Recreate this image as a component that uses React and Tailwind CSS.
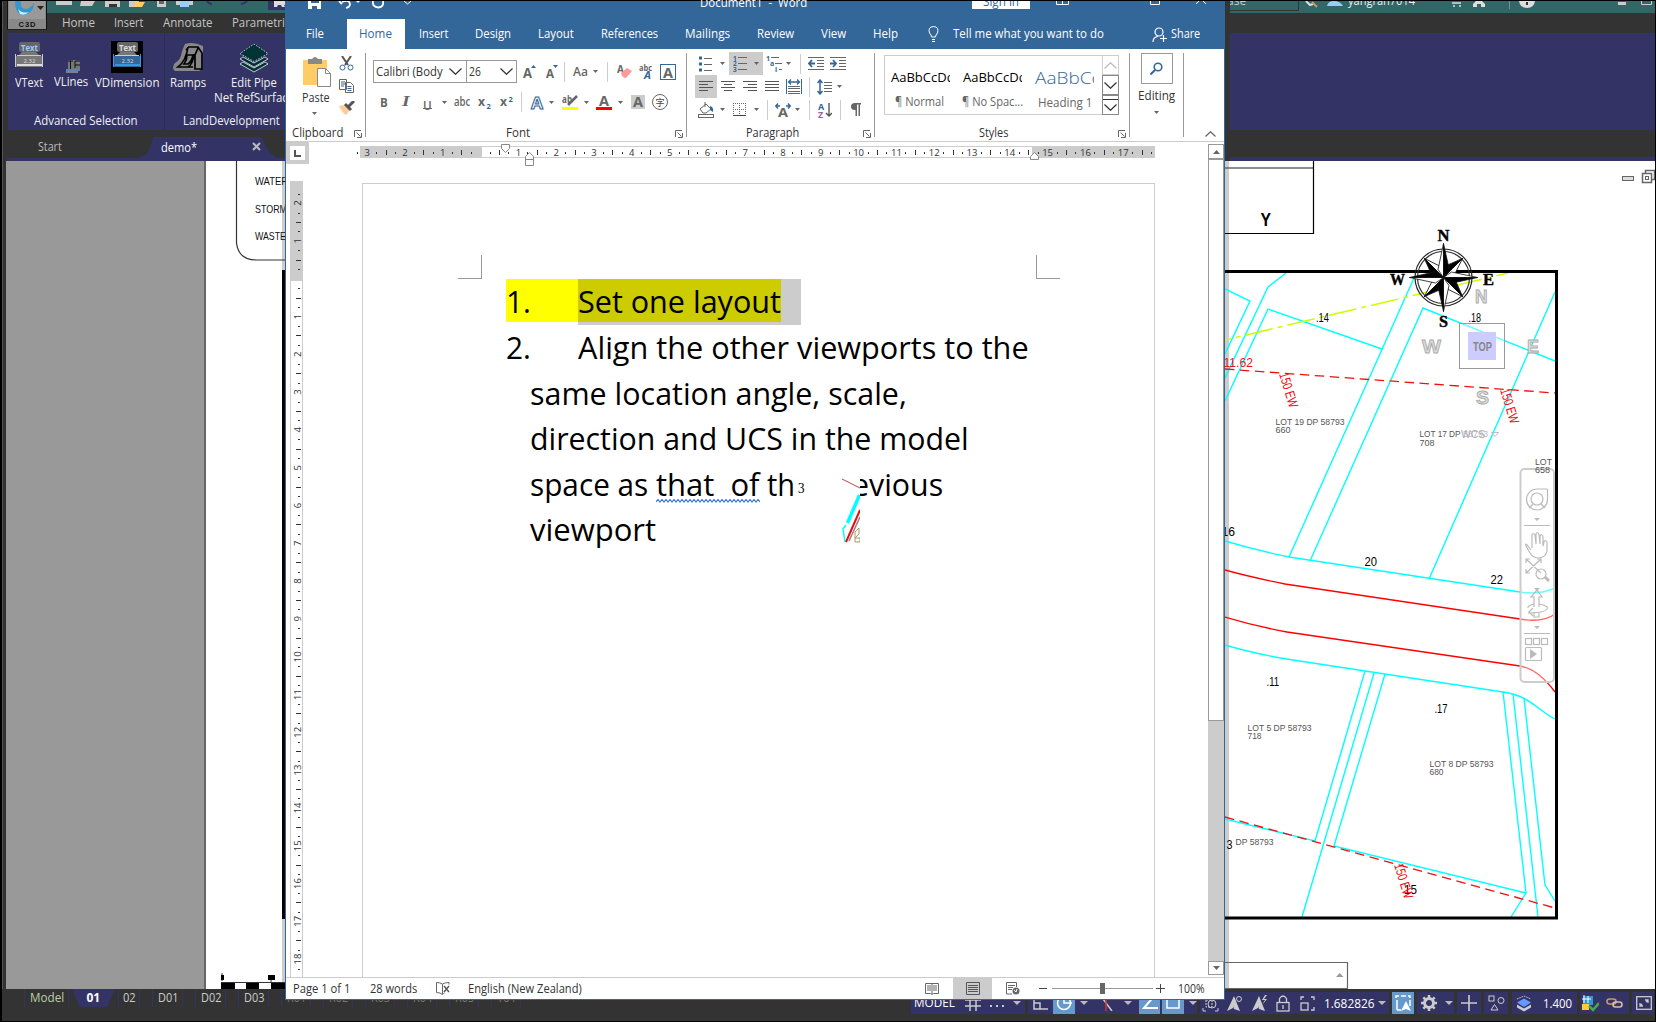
import React, { useLayoutEffect, useRef, useState } from "react";

/* Text squeezed or stretched horizontally to the width of its box. */
function Fit({ className = "", children }) {
  const box = useRef(null);
  const text = useRef(null);
  const [scale, setScale] = useState(1);
  useLayoutEffect(() => {
    const w = text.current.offsetWidth;
    if (w) setScale(box.current.clientWidth / w);
  }, [children]);
  return (
    <span ref={box} className={"inline-block shrink-0 text-left " + className}>
      <span ref={text} className="inline-block origin-left whitespace-pre" style={{ transform: `scaleX(${scale})` }}>
        {children}
      </span>
    </span>
  );
}

const Svg = ({ w, h, className = "", children, ...rest }) => (
  <svg width={w} height={h} viewBox={`0 0 ${w} ${h}`} className={"block shrink-0 " + className} fill="none" {...rest}>
    {children}
  </svg>
);

const Caret = ({ className = "", fill = "#666" }) => (
  <Svg w={5} h={3} className={className}><path d="M0 0h5L2.5 3z" fill={fill} /></Svg>
);
const Sep = ({ className = "" }) => <div className={"h-5 w-px shrink-0 bg-[#ccc] " + className} />;
const Launcher = ({ className = "" }) => (
  <Svg w={8} h={8} className={className}>
    <path d="M.5 7V.5H7M2.5 2.5l4 4M7.5 3v4.5H3" stroke="#666" />
  </Svg>
);
const Chevron = ({ w = 13, h = 7, stroke = "#333", up, className = "" }) => (
  <Svg w={w} h={h} className={className}>
    <path d={up ? `M.5 ${h - 0.5}L${w / 2} .7L${w - 0.5} ${h - 0.5}` : `M.5 .5L${w / 2} ${h - 0.7}L${w - 0.5} .5`} stroke={stroke} strokeWidth="1.2" />
  </Svg>
);

/* ---------- CAD application, behind ---------- */

const CadTitleLeft = () => (
  <Svg w={239} h={12}>
    <rect width="239" height="12" fill="#366" />
    <rect x="9" y="0" width="16" height="4" fill="#ccc" />
    <path d="M34 0h14l-3 5H33z" fill="#ccc" />
    <rect x="58" y="0" width="15" height="6" fill="#ccc" /><rect x="62" y="3" width="8" height="3" fill="#333" />
    <rect x="82" y="0" width="10" height="6" fill="#ccc" /><path d="M88 1h10l-3 5h-8z" fill="#fc6" />
    <rect x="110" y="0" width="9" height="6" fill="#ccc" /><rect x="112" y="0" width="5" height="3" fill="#666" />
    <rect x="129" y="0" width="17" height="4" fill="#ccc" /><rect x="133" y="0" width="9" height="6" fill="#9cf" />
    <path d="M160 0q2 3 5 3M200 0q-3 3-6 3" stroke="#336" strokeWidth="2" />
    <rect x="221" y="0" width="18" height="9" fill="#333366" />
    <path d="M227 0h12v4h-2l1 2h-3l-1-2h-3l-1 2h-3z" fill="#ddd" />
  </Svg>
);

const AppButton = () => (
  <Svg w={40} h={29}>
    <rect x=".5" y="-4" width="39" height="32" fill="#888" stroke="#111" />
    <rect x="2" y="-4" width="36" height="23" fill="#999" />
    <path d="M8 0h6q-1 7 4 8 5 0 9-6 0 10-10 12-9 0-9-14z" fill="#39c" />
    <path d="M11 8q4 5 11 3-4 4-9 2z" fill="#cef" />
    <path d="M30 5h7l-3.500 4z" fill="#222" />
    <rect x="1" y="18" width="38" height="10" fill="#888" />
    <text x="20" y="25.500" textAnchor="middle" fontSize="7.500" fontWeight="bold" textLength="17" fontFamily="Liberation Sans, sans-serif" fill="#111">C3D</text>
  </Svg>
);

const Dimension = ({ dark }) => (
  <Svg w={32} h={32}>
    {dark && <rect width="32" height="32" fill="#000" />}
    <rect x="6" y="1" width="21" height="10" rx="2" fill="#666" />
    <text x="16.500" y="9.500" textAnchor="middle" fontSize="9" fontWeight="bold" textLength="17" lengthAdjust="spacingAndGlyphs" fontFamily="Open Sans, sans-serif" fill={dark ? "#ddd" : "#9cf"}>Text</text>
    <path d="M9 11h14l3 3H6z" fill="#777" />
    <rect x="2" y="15" width="28" height="11" rx="1" fill={dark ? "#369" : "#777"} />
    <text x="16.500" y="21.500" textAnchor="middle" fontSize="6" fontFamily="Open Sans, sans-serif" fill="#ddd">2.32</text>
    <path d="M2.500 13v13M29.500 13v13" stroke={dark ? "#39f" : "#ccc"} /><path d="M4 14.500h24" stroke="#ccc" /><path d="M4 24h25" stroke={dark ? "#3af" : "#fff"} strokeWidth="1.500" />
  </Svg>
);

const CadTool = ({ className, icon, label, second }) => (
  <div className={"flex shrink-0 flex-col items-center " + className}>
    <div className="flex h-[33px] items-end">{icon}</div>
    {label}
    {second}
  </div>
);

function CadLeft() {
  return (
    <div className="flex h-[161px] w-[285px] flex-col overflow-hidden pl-px text-[12px] text-[#f0f0f0]">
      <div className="flex h-8 items-start">
        <div className="w-[40px]"><AppButton /></div>
        <div className="flex flex-col">
          <CadTitleLeft />
          <div className="flex h-[20px] items-center pl-[15px] leading-[20px] text-[#c4c4c4]">
            <Fit className="w-[33px]">Home</Fit>
            <Fit className="ml-[19px] w-[29px]">Insert</Fit>
            <Fit className="ml-[20px] w-[50px]">Annotate</Fit>
            <Fit className="ml-[19px] w-[58px]">Parametric</Fit>
          </div>
        </div>
      </div>
      <div className="ml-px flex h-[97px] gap-px overflow-hidden bg-[#2b2b55]">
        <div className="flex w-[156px] shrink-0 flex-col bg-[#333366]">
          <div className="flex h-[76px] pt-[7px] leading-[15px]">
            <CadTool className="ml-[6px] w-[30px]" icon={<Dimension />} label={<Fit className="mt-[2px] w-[28px]">VText</Fit>} />
            <CadTool
              className="ml-[10px] w-[34px]"
              icon={<Svg w={14} h={13} className="ml-[4px]"><rect x="2" y="0" width="12" height="9" fill="#777" /><path d="M2 1h5M4.500 1v8M9 1h5M9 5h5M9 1v7" stroke="#111" /><path d="M0 10h14" stroke="#9cf" /><path d="M0 12h12" stroke="#ccb" /></Svg>}
              label={<Fit className="mt-px w-[34px]">VLines</Fit>}
            />
            <CadTool className="ml-[6px] w-[65px]" icon={<Dimension dark />} label={<Fit className="mt-[2px] w-[64px]">VDimension</Fit>} />
          </div>
          <Fit className="ml-[26px] mt-[4px] w-[104px] leading-4">Advanced Selection</Fit>
        </div>
        <div className="flex w-[130px] shrink-0 flex-col bg-[#333366]">
          <div className="flex h-[76px] pt-[7px] leading-[15px]">
            <CadTool
              className="ml-[5px] w-[36px]"
              icon={<Svg w={32} h={32}><path d="M13 3q8-3 18 2v22l-4 3H3q-4-3 0-8q6-3 7-12z" fill="#888" /><path d="M16 6l10 0 4 6v16h-7V14l3-7M16 6q-2 14-10 20h15M22 13q-1 10-6 13M16 7l-2 2M15 14h6q-1 6-5 9h-4q3-4 3-9" stroke="#000" strokeWidth="1.700" /></Svg>}
              label={<Fit className="mt-[2px] w-[36px]">Ramps</Fit>}
            />
            <CadTool
              className="ml-[8px] w-[80px]"
              icon={<Svg w={30} h={30}><g fill="#033" stroke="#eee" strokeWidth=".8"><path d="M1 21l14 8 14-8-3-2-11 6-11-6z" /><path d="M1 16l14 8 14-8-3-2-11 6-11-6z" /><path d="M1 10.500l14 8 14-8L15 1z" strokeDasharray="1.500 1.500" /></g></Svg>}
              label={<Fit className="mt-[2px] w-[46px]">Edit Pipe</Fit>}
              second={<Fit className="w-[80px]">Net RefSurface</Fit>}
            />
          </div>
          <Fit className="ml-[18px] mt-[4px] w-[97px] leading-4">LandDevelopment</Fit>
        </div>
      </div>
      <div className="flex h-[28px] items-center pl-[31px] leading-5 text-[#ddd]">
        <Fit className="mt-[6px] w-[24px] text-[#bbb]">Start</Fit>
        <div className="ml-[76px] mt-[7px] flex h-[21px] w-[140px] items-center rounded-t-[9px] bg-[#333366] pl-[23px] [clip-path:polygon(0_100%,7%_75%,11%_0,88%_0,94%_75%,100%_100%)]">
          <Fit className="w-[36px] text-white">demo*</Fit>
          <Svg w={9} h={9} className="-mt-[2px] ml-[55px]"><path d="M1 1l7 7M8 1l-7 7" stroke="#bbb" strokeWidth="2" /></Svg>
        </div>
      </div>
      <div className="h-[4px] shrink-0 bg-[#333366]" />
    </div>
  );
}

function CadTopRight() {
  return (
    <div className="flex h-[161px] w-[430px] flex-col pl-[5px]">
      <Svg w={425} h={12}>
        <rect width="425" height="12" fill="#366" />
        <path d="M0 9.500h68.500V0" stroke="#333" />
        <text x="-3" y="3.500" fontSize="12" fontFamily="Open Sans, sans-serif" fill="#ccc">ase</text>
        <path d="M76 0l4 4 3-1" stroke="#ddd" strokeWidth="2" /><path d="M82 1l5 5" stroke="#c96" strokeWidth="2" />
        <path d="M97 5q1-5 7-5t9 5z" fill="#9cf" />
        <text x="118" y="3.500" fontSize="12" textLength="67" lengthAdjust="spacingAndGlyphs" fontFamily="Open Sans, sans-serif" fill="#eee">yangran7014</text>
        <path d="M222 2h9M223 5h2M229 5h2" stroke="#ddd" strokeWidth="1.500" />
        <path d="M243 6V3l3-3h6l3 3v3h-4V3h-4v3z" fill="#ddd" />
        <path d="M279.500 0v8" stroke="#888" />
        <path d="M289 0h16q-1 7-8 7t-8-7z" fill="#ddd" /><rect x="296" y="1" width="2" height="3" fill="#333" />
        <rect x="388" y="1" width="8" height="3" fill="#ccc" /><path d="M411.500 0v3.500h10V0" stroke="#ccc" />
      </Svg>
      <div className="h-[20px]" />
      <div className="h-[97px] bg-[#333366]" />
      <div className="h-[27px]" />
      <div className="h-[4px] bg-[#333366]" />
    </div>
  );
}

const CanvasLeft = () => (
  <div className="flex h-[828px] w-[279px] bg-white">
    <div className="w-[200px] shrink-0 border-r-2 border-[#666] bg-[#999]" />
    <svg width="79" height="828" viewBox="206 161 79 828" fill="none" className="block">
      <rect x="282" y="161" width="3" height="828" fill="#ccc" />
      <path d="M236.500 161v82q2 17 20 17h29" stroke="#333" strokeWidth="1.200" />
      <g fontFamily="Liberation Sans, sans-serif" fontSize="11.500" fill="#111">
        <text x="255" y="185.300" textLength="33" lengthAdjust="spacingAndGlyphs">WATER</text>
        <text x="255" y="213.300" textLength="32" lengthAdjust="spacingAndGlyphs">STORM</text>
        <text x="255" y="240.300" textLength="31" lengthAdjust="spacingAndGlyphs">WASTE</text>
      </g>
      <path d="M283.500 270v649" stroke="#000" strokeWidth="3" />
      <path d="M221 982.500h64M222 981v-8M271 975v8" stroke="#333" />
      <g fill="#000"><rect x="221" y="975" width="3" height="5" /><rect x="268" y="975" width="7" height="5" /><rect x="221" y="983" width="14" height="6" /><rect x="246" y="983" width="13" height="6" /><rect x="271" y="983" width="14" height="6" /></g>
    </svg>
  </div>
);

const T = ({ x, y, w, children, ...rest }) => (
  <text x={x} y={y} textLength={w} lengthAdjust="spacingAndGlyphs" {...rest}>{children}</text>
);

const Rose = () => (
  <g transform="translate(1443.500 277.500)">
    <circle r="28.500" stroke="#222" strokeWidth="1.200" /><circle r="26" stroke="#333" strokeWidth="1.200" />
    {[0, 90, 180, 270].map((a) => (
      <g key={a} transform={`rotate(${a + 45})`}>
        <path d="M0-27L6-9L0 0z" fill="#fff" stroke="#111" strokeWidth=".8" /><path d="M0-27L-7-9L0 0z" fill="#000" stroke="#111" strokeWidth=".8" />
      </g>
    ))}
    {[0, 90, 180, 270].map((a) => (
      <g key={a} transform={`rotate(${a})`}>
        <path d="M0-34L-5.500-8L0 0z" fill="#fff" stroke="#111" strokeWidth=".8" /><path d="M0-34L6-7L0 0z" fill="#000" stroke="#111" strokeWidth=".8" />
      </g>
    ))}
  </g>
);

const SiteMap = () => (
  <svg width="430" height="828" viewBox="1225 161 430 828" fill="none" className="block bg-white">
    <rect x="1225" y="161" width="4" height="828" fill="#ccc" />
    <path d="M1225 168h88" stroke="#666" strokeWidth="1.500" /><path d="M1313.500 161v72.500H1225" stroke="#000" strokeWidth="1.200" />
    <T x="1260.500" y="225.500" w="10.500" fontSize="18" fontWeight="bold" fill="#000" fontFamily="Liberation Sans, sans-serif">Y</T>
    <g stroke="#0ff" strokeWidth="1.400">
      <path d="M1225 289l25 12-25 53M1286 273l-18 14-43 91M1225 401l43-92 114 40M1414 278l-125 279M1310 561l113-253 132 53M1555 292l-126 287" />
      <path d="M1225 541Q1255 550 1289 557L1520 592Q1540 595 1555 588" />
      <path d="M1225 645Q1255 654 1293 660L1503 692C1530 696 1536 709 1555 719" />
      <path d="M1365 671l-50 170L1225 819M1374 673l-72 244M1385 674l-51 172 192 47-15 24M1503 692l23 201M1513 694l25 223M1524 698l21 187 10 16" />
    </g>
    <path d="M1225 340L1508 273" stroke="#cf0" strokeWidth="1.500" strokeDasharray="28 5 5 5" strokeDashoffset="22" />
    <g stroke="#e11" strokeWidth="1.300">
      <path d="M1225 369l330 24M1225 817l330 91" strokeDasharray="9.500 5.500" />
      <path d="M1225 570Q1250 577 1285 584L1520 619Q1543 623 1555 614M1225 617Q1255 626 1287 632L1520 666Q1538 669 1555 692" stroke="#f00" />
    </g>
    <path d="M1225 271.500h331.500V918H1225" stroke="#000" strokeWidth="3" />
    <g stroke="#ccc" fill="#fff" fillOpacity=".4">
      <rect x="1520.500" y="469" width="33.500" height="213" rx="4" strokeWidth="2" stroke="#ccc" />
      <g fill="none" strokeWidth="1.200" stroke="#bbb">
        <path d="M1547 489h-10a10.500 10.500 0 1 0 10.500 10.500V489.500z" /><circle cx="1537" cy="499" r="6" /><path d="M1529 508l4-4M1545 508l-4-4" />
        <path d="M1524 525.500h26M1524 633.500h26" />
        <path d="M1531 550l-4-5q-2-2-1 1l4 7q3 5 9 5 7-1 8-7v-9q-2-3-3 0l-1 4v-9q-1-4-3-1v8l-1-10q-2-3-3 0v10l-1-9q-2-3-3 0v13" />
        <path d="M1526 559l15 14M1541 559l-15 14M1526 563v-4h4M1537 559h4v4M1526 569v4h4" /><circle cx="1541" cy="574" r="5" /><path d="M1545 577l4 4" strokeWidth="3" />
        <path d="M1534 607v-10h-3l6-7 5 7h-3v10M1534 612v5h5v-5M1534 604q-7 2-6 4M1539 604q10 2 8 5-3 4-19 4M1533 608l-4 4 4 4" />
        <rect x="1525.500" y="638.500" width="6" height="6" /><rect x="1533.500" y="638.500" width="6" height="6" /><rect x="1541.500" y="638.500" width="6" height="6" />
        <rect x="1525.500" y="647.500" width="16" height="13" rx="1" />
      </g>
      <g fill="#bbb" stroke="none" fillOpacity="1"><path d="M1534 518h6l-3 3zM1534 588h6l-3 3zM1534 626h6l-3 3zM1530 649l7 5-7 5z" /></g>
    </g>
    <Rose />
    <g fontFamily="Liberation Serif, serif" fontWeight="bold" fontSize="16" fill="#000" stroke="#000" strokeWidth=".4">
      <T x="1437.500" y="240.500" w="12">N</T><T x="1439" y="327" w="9">S</T><T x="1390" y="285" w="15">W</T><T x="1483" y="285" w="11">E</T>
    </g>
    <g fontFamily="Liberation Sans, sans-serif" fontWeight="bold" fontSize="19" fill="#ddd" stroke="#aaa" strokeWidth=".9">
      <T x="1475" y="303" w="12.500">N</T><T x="1422" y="353" w="19">W</T><T x="1527" y="353" w="12">E</T><T x="1476" y="404" w="13">S</T>
    </g>
    <rect x="1459.500" y="323.500" width="45" height="45" stroke="#999" fill="#fff" fillOpacity=".4" />
    <rect x="1468" y="332" width="28" height="28" fill="#ccf" />
    <T x="1473" y="350.500" w="19" fontSize="12.500" fontWeight="bold" fill="#888" fontFamily="Liberation Sans, sans-serif">TOP</T>
    <g fontFamily="Liberation Sans, sans-serif" fontSize="13" fill="#000">
      <T x="1316" y="322" w="13">.14</T><T x="1468.500" y="322" w="12.500">.18</T>
      <T x="1221.500" y="535.500" w="13.500">16</T><T x="1364.500" y="566" w="12.500">20</T><T x="1490.500" y="584" w="12.500">22</T>
      <T x="1266.500" y="686" w="12.500">.11</T><T x="1434.500" y="712.500" w="13">.17</T><T x="1226.500" y="849" w="6">3</T><T x="1404" y="894" w="13">15</T>
    </g>
    <g fontFamily="Liberation Sans, sans-serif" fontSize="13.500" fill="#e11">
      <T x="1223.500" y="367" w="29.500">11.62</T>
      <T x="0" y="0" w="36" transform="translate(1279 374) rotate(73)">150 EW</T>
      <T x="0" y="0" w="36" transform="translate(1500 390) rotate(73)">150 EW</T>
      <T x="0" y="0" w="36" transform="translate(1394 865) rotate(73)">150 EW</T>
    </g>
    <g fontFamily="Liberation Sans, sans-serif" fontSize="9" fill="#555">
      <T x="1275.500" y="424.800" w="69">LOT 19 DP 58793</T><T x="1275.500" y="432.800" w="15">660</T>
      <T x="1419.500" y="436.800" w="41">LOT 17 DP</T><T x="1463" y="436.800" w="25" fill="#bbb">58793</T><T x="1419.500" y="445.800" w="15">708</T>
      <T x="1535" y="465" w="17">LOT</T><T x="1535" y="472.800" w="15">658</T>
      <T x="1247.500" y="730.800" w="64">LOT 5 DP 58793</T><T x="1247.500" y="738.800" w="14">718</T>
      <T x="1429.500" y="766.800" w="64">LOT 8 DP 58793</T><T x="1429.500" y="774.800" w="14">680</T>
      <T x="1235.500" y="844.800" w="38">DP 58793</T>
    </g>
    <T x="1461" y="437.500" w="24" fontSize="11" fill="#aab" fontFamily="Liberation Sans, sans-serif">WCS</T>
    <path d="M1491.500 432.500h7l-3.500 4z" stroke="#bbc" />
    <rect x="1622.500" y="176.500" width="11" height="4" stroke="#666" fill="#ddd" />
    <path d="M1645.500 173v-2.500h9v9H1652" stroke="#666" strokeWidth="1.500" /><rect x="1642.500" y="173.500" width="9" height="9" stroke="#666" fill="#fff" strokeWidth="1.500" /><rect x="1645.500" y="176.500" width="3" height="3" stroke="#666" />
    <path d="M1225 962.500h122.500v26H1225" stroke="#666" strokeWidth="1.200" /><path d="M1336 977h7.500l-3.750-4z" fill="#999" />
  </svg>
);

const LayoutTab = ({ className, children }) => (
  <div className={"flex h-[18px] shrink-0 items-center justify-center border-x border-[#333366] " + className}>{children}</div>
);

function CadBottom() {
  return (
    <div className="flex h-[32px] w-full items-start bg-[#333] text-[12px] leading-[18px] text-[#ccc]">
      <div className="flex h-[18px] w-[909px] shrink-0 items-center overflow-hidden pl-[22px]">
        <LayoutTab className="w-[45px] text-[#bcd0a8]"><Fit className="w-[34px]">Model</Fit></LayoutTab>
        <div className="ml-[3px] mr-[2px] flex h-[18px] w-[43px] shrink-0 items-center justify-center bg-[#333366] font-bold text-white [clip-path:polygon(0_0,100%_0,82%_100%,18%_100%)]"><Fit className="w-[14px]">01</Fit></div>
        <LayoutTab className="ml-px w-[22px]"><Fit className="w-[13px]">02</Fit></LayoutTab>
        <LayoutTab className="ml-[12px] w-[31px]"><Fit className="w-[20px]">D01</Fit></LayoutTab>
        <LayoutTab className="ml-[12px] w-[31px]"><Fit className="w-[20px]">D02</Fit></LayoutTab>
        <LayoutTab className="ml-[12px] w-[31px]"><Fit className="w-[20px]">D03</Fit></LayoutTab>
        {["R01", "R02", "K03", "R04", "R05", "Y01"].map((n) => (
          <LayoutTab key={n} className="ml-[12px] w-[30px] text-[#777]"><Fit className="w-[19px]">{n}</Fit></LayoutTab>
        ))}
      </div>
      <CadStatus />
    </div>
  );
}

const Seg = ({ className, children }) => <div className={"flex h-[22px] shrink-0 items-center bg-[#333366] " + className}>{children}</div>;
const Down = ({ className = "" }) => <Svg w={8} h={4} className={className}><path d="M0 0h8L4 4z" fill="#bbb" /></Svg>;

const CadStatus = () => (
  <div className="mt-[3px] flex h-[23px] w-[744px] shrink-0 gap-[3px] overflow-hidden text-white">
    <Seg className="w-[114px]">
      <Fit className="ml-[3px] w-[41px] leading-[22px]">MODEL</Fit>
      <Svg w={16} h={16} className="ml-[10px]"><path d="M5 0v16M11 0v16M0 5h16M0 11h16" stroke="#ccc" strokeWidth="1.500" /></Svg>
      <Svg w={14} h={10} className="ml-[9px]"><path d="M0 1h2M6 1h2M12 1h2M0 8h2M6 8h2M12 8h2" stroke="#ccc" strokeWidth="2" /></Svg>
      <Down className="ml-[9px]" />
    </Seg>
    <Seg className="w-[169px]">
      <Svg w={17} h={16} className="ml-[3px]"><path d="M3 0v14h14M3 8h6v6" stroke="#ccc" strokeWidth="1.500" /></Svg>
      <div className="ml-[5px] flex h-[22px] w-[22px] items-center justify-center bg-[#69c]"><Svg w={16} h={16}><circle cx="8" cy="8" r="6.500" stroke="#fff" strokeWidth="1.500" /><path d="M8 0v8h8" stroke="#fff" strokeWidth="1.500" /></Svg></div>
      <Down className="ml-[5px]" />
      <Svg w={14} h={16} className="ml-[11px]"><path d="M1 0l12 16" stroke="#ccc" strokeWidth="1.500" /><path d="M7 0v16" stroke="#c33" strokeWidth="1.500" /></Svg>
      <Down className="ml-[11px]" />
      <div className="ml-[7px] flex h-[22px] w-[22px] items-center justify-center bg-[#69c]"><Svg w={16} h={16}><path d="M13 0L2 13h14" stroke="#fff" strokeWidth="2" /></Svg></div>
      <div className="ml-[2px] flex h-[22px] w-[22px] items-center justify-center bg-[#69c]"><Svg w={16} h={16}><rect x="2" y="-2" width="12" height="15" stroke="#fff" strokeWidth="1.500" /></Svg></div>
      <Down className="ml-[5px]" />
    </Seg>
    <Seg className="w-[189px]">
      <Svg w={17} h={17} className="ml-[2px]"><path d="M1 4V1h3M13 1h3v3M16 13v3h-3M4 16H1v-3" stroke="#ccc" /><rect x="4" y="5" width="6" height="7" stroke="#ccc" strokeDasharray="2 1" /><circle cx="10" cy="9" r="4" stroke="#ccc" /></Svg>
      <Svg w={17} h={17} className="ml-[7px]"><path d="M8 1L1 16l6-3v-2l1 3 6 2z" fill="#ccc" /><circle cx="13" cy="4" r="2.500" stroke="#ccc" /></Svg>
      <Svg w={17} h={17} className="ml-[8px]"><path d="M8 1L1 16l6-3v-2l1 3 6 2z" fill="#ccc" /><path d="M14 0l-3 5h3l-3 5 5-6h-3l3-4z" fill="#ccc" /></Svg>
      <Svg w={14} h={17} className="ml-[8px]"><rect x="1" y="7.500" width="12" height="8.500" stroke="#ccc" strokeWidth="1.300" /><path d="M3.500 7V3.500q3.500-5 7 0V7M7 10v4" stroke="#ccc" strokeWidth="1.300" /></Svg>
      <Svg w={15} h={15} className="ml-[10px]"><path d="M1 4V1h3M11 1h3v3M14 11v3h-3" stroke="#ccc" strokeWidth="1.300" /><rect x="1" y="7" width="7" height="7" stroke="#ccc" strokeWidth="1.300" /></Svg>
      <Fit className="ml-[9px] w-[50px] text-[13px] leading-[22px]">1.682826</Fit>
      <Down className="ml-[4px]" />
    </Seg>
    <div className="flex h-[22px] w-[22px] shrink-0 items-center justify-center bg-[#69c]"><Svg w={16} h={17}><path d="M2 15V5M1 3V1h3M6 1h5M13 1h2v2M15 5v6M2 15h4" stroke="#fff" strokeWidth="1.500" /><path d="M11 6L6 16l5-2 5 2z" fill="#fff" /></Svg></div>
    <Seg className="w-[37px]">
      <Svg w={16} h={16} className="ml-[4px]"><circle cx="8" cy="8" r="4.500" stroke="#ccc" strokeWidth="3" /><path d="M8 0v3M8 13v3M0 8h3M13 8h3M2.300 2.300l2 2M11.700 11.700l2 2M13.700 2.300l-2 2M4.300 11.700l-2 2" stroke="#ccc" strokeWidth="2.500" /></Svg>
      <Down className="ml-[8px]" />
    </Seg>
    <Seg className="w-[24px] justify-center"><Svg w={16} h={16}><path d="M8 0v16M0 8h16" stroke="#ccc" strokeWidth="1.600" /></Svg></Seg>
    <Seg className="w-[24px] justify-center"><Svg w={17} h={16}><rect x="1" y="1" width="5" height="5" stroke="#ccc" /><circle cx="13" cy="5.500" r="3" stroke="#ccc" /><path d="M6.500 9.500L3 15h7z" stroke="#ccc" /></Svg></Seg>
    <Seg className="ml-px w-[65px]">
      <Svg w={16} h={17} className="ml-[4px]"><path d="M1 4l7-3 7 3" stroke="#ccc" strokeDasharray="1.500 1" /><path d="M1 9.500l7 4 7-4v3L8 16.500l-7-4z" fill="#ccc" /><path d="M1 7.500l7-4 7 4-7 4.500z" fill="#69f" /></Svg>
      <Fit className="ml-[11px] w-[29px] text-[13px] leading-[22px]">1.400</Fit>
    </Seg>
    <Seg className="w-[49px]">
      <Svg w={17} h={17} className="ml-[2px]"><rect x="1" y="1" width="10" height="9" fill="#39c" /><path d="M2 0v8M0 4h9M6 1v7" stroke="#fff" /><rect x="0" y="9" width="7" height="6" fill="#fc3" /><path d="M7 11l4 4 6-7" stroke="#4a5" strokeWidth="2.500" /></Svg>
      <Svg w={17} h={10} className="ml-[7px]"><rect x="1" y="1" width="9" height="5" rx="2.500" stroke="#c96" strokeWidth="1.600" /><rect x="7" y="4" width="9" height="5" rx="2.500" stroke="#dba" strokeWidth="1.600" /></Svg>
    </Seg>
    <Seg className="w-[22px] pl-[4px]"><Svg w={16} h={14}><rect x=".7" y=".7" width="14.600" height="12.600" stroke="#ccc" strokeWidth="1.300" /><path d="M4 7v3h3M9 4h3v3M4 10l2-2M12 4l-2 2" stroke="#ccc" strokeWidth="1.300" /></Svg></Seg>
  </div>
);

/* ---------- Word window ---------- */

const glyph = { fontFamily: "Open Sans, sans-serif", fontWeight: "bold", fill: "#666" };
const Lines = ({ ys, x1 = [0, 0, 0, 0, 0], x2 = [14, 14, 14, 14, 14], w = 14, h = 12 }) => (
  <Svg w={w} h={h}>{ys.map((y, i) => <path key={y} d={`M${x1[i]} ${y + 0.5}H${x2[i]}`} stroke="#555" />)}</Svg>
);
const ALIGN = [0, 3, 6, 9];

function WordTop() {
  return (
    <div className="flex h-[48px] flex-col bg-[#336699] text-[12px] text-white">
      <div className="flex h-[18px] items-start">
        <Svg w={110} h={12} className="ml-[22px]">
          <path d="M0 0h13v8H0z" fill="#fff" /><path d="M3 0h8v2H3zM4 5h5v3H4z" fill="#369" />
          <path d="M31 0l3 3M34 1q7-3 8 2 0 3-4 4" stroke="#fff" strokeWidth="1.800" /><path d="M48 0h4l-2 2z" fill="#fff" />
          <path d="M65 0q-1 6 5.500 6.500Q76 6 75 0" stroke="#fff" strokeWidth="1.800" /><path d="M96 0l3.500 3L103 0" stroke="#fff" />
        </Svg>
        <Fit className="-mt-[8px] ml-[282px] w-[107px] leading-5">Document1  -  Word</Fit>
        <div className="ml-[165px] flex h-[8px] w-[58px] justify-center overflow-hidden bg-white text-[#369]"><Fit className="-mt-[9px] w-[36px] leading-5">Sign in</Fit></div>
        <Svg w={152} h={5} className="ml-[26px]"><path d="M.5 0v3.500h12V0M6.500 0v3.500M94.500 0v3.500h9V0M140 3l5-5 5 5" stroke="#fff" /></Svg>
      </div>
      <div className="flex h-[30px] items-center leading-[30px]">
        <Fit className="ml-[20px] w-[18px]">File</Fit>
        <div className="ml-[23px] flex h-[30px] w-[58px] bg-white pl-[12px] text-[#369]"><Fit className="w-[33px]">Home</Fit></div>
        <Fit className="ml-[14px] w-[29px]">Insert</Fit>
        <Fit className="ml-[27px] w-[36px]">Design</Fit>
        <Fit className="ml-[27px] w-[36px]">Layout</Fit>
        <Fit className="ml-[27px] w-[57px]">References</Fit>
        <Fit className="ml-[27px] w-[45px]">Mailings</Fit>
        <Fit className="ml-[27px] w-[37px]">Review</Fit>
        <Fit className="ml-[27px] w-[25px]">View</Fit>
        <Fit className="ml-[27px] w-[25px]">Help</Fit>
        <Svg w={11} h={16} className="ml-[30px]"><path d="M3.500 11q0-2-2-4-2-6 4-6.500 6 .5 4 6.500-2 2-2 4zM4 13.500h3M4 15.500h3" stroke="#fff" /></Svg>
        <Fit className="ml-[14px] w-[151px]">Tell me what you want to do</Fit>
        <Svg w={15} h={15} className="ml-[48px]"><circle cx="7" cy="5" r="4" stroke="#fff" strokeWidth="1.200" /><path d="M1 15q0-5 5-5.500M8 11.500h7M11.500 8v7" stroke="#fff" strokeWidth="1.200" /></Svg>
        <Fit className="ml-[4px] w-[29px]">Share</Fit>
      </div>
    </div>
  );
}

const Group = ({ className, label, children }) => (
  <div className={"flex shrink-0 flex-col " + className}>
    <div className="h-[76px]">{children}</div>
    <div className="flex h-[16px] items-center leading-4">{label}</div>
  </div>
);
const Divider = () => <div className="mt-[4px] h-[84px] w-px shrink-0 bg-[#999]" />;

function Ribbon() {
  return (
    <div className="flex h-[93px] border-b border-[#ccc] bg-white text-[12px] text-[#333]">
      <Group className="w-[79px]" label={<><Fit className="ml-[6px] w-[51px]">Clipboard</Fit><Launcher className="ml-[11px] mt-px" /></>}>
        <div className="flex">
          <div className="ml-[14px] flex w-[31px] flex-col items-center pt-[8px]">
            <Svg w={28} h={30} className="ml-[2px]"><rect x="0" y="3" width="24" height="25" fill="#fc6" /><path d="M5 2h4q3-4 6 0h4v5H5z" fill="#888" /><path d="M14.500 11.500h8l5 5v13h-13z" fill="#fff" stroke="#888" /><path d="M22.500 11.500v5h5" stroke="#888" /></Svg>
            <Fit className="mt-px w-[28px] leading-5">Paste</Fit>
            <Caret className="mr-[2px] mt-[4px]" />
          </div>
          <div className="ml-[8px] flex flex-col pt-[7px]">
            <Svg w={15} h={15}><path d="M3 0l6 9M12 0L6 9" stroke="#555" strokeWidth="2" /><circle cx="3.500" cy="11.500" r="2.500" stroke="#369" /><circle cx="11.500" cy="11.500" r="2.500" stroke="#369" /></Svg>
            <Svg w={15} h={14} className="mt-[8px]"><path d="M.5.500h7v10h-7zM6.500 3.500h5l3 3v7h-8z" fill="#fff" stroke="#666" /><path d="M2 3h4M2 5h4M2 7h3M8.500 7.500h4M8.500 9.500h4M8.500 11.500h4" stroke="#369" /></Svg>
            <Svg w={16} h={15} className="mt-[8px]"><path d="M0 5l5-1 6 5-4 5q-3-1-7-9z" fill="#fc9" /><path d="M6 3l6 6M9 6l6-6" stroke="#555" strokeWidth="3" /></Svg>
          </div>
        </div>
      </Group>
      <Divider />
      <Group className="w-[320px]" label={<><Fit className="ml-[140px] w-[24px]">Font</Fit><Launcher className="ml-[145px] mt-px" /></>}>
        <div className="mt-[11px] flex h-[23px] items-center pl-[7px]">
          <div className="flex h-[23px] w-[94px] items-center border border-[#999] pl-[2px]"><div className="w-[67px] overflow-hidden"><Fit className="w-[67px] leading-5">Calibri (Body</Fit></div><Chevron className="ml-[6px]" /></div>
          <div className="-ml-px flex h-[23px] w-[51px] items-center border border-[#999] pl-[2px]"><Fit className="w-[12px] leading-5">26</Fit><Chevron className="ml-[19px]" /></div>
          <Svg w={13} h={16} className="-mt-[2px] ml-[6px]"><text x="0" y="14.500" fontSize="14" textLength="9" lengthAdjust="spacingAndGlyphs" {...glyph}>A</text><path d="M8 5h5l-2.500-3z" fill="#369" /></Svg>
          <Svg w={13} h={16} className="-mt-[2px] ml-[10px]"><text x="0" y="15" fontSize="12" textLength="8" lengthAdjust="spacingAndGlyphs" {...glyph}>A</text><path d="M7 2h5L9.500 5z" fill="#369" /></Svg>
          <Sep className="ml-[5px]" />
          <Fit className="ml-[8px] w-[15px] font-semibold leading-5 text-[#666]">Aa</Fit><Caret className="ml-[5px]" />
          <Sep className="ml-[9px]" />
          <Svg w={15} h={15} className="ml-[9px]"><text x="0" y="9" fontSize="10" {...glyph}>A</text><path d="M4 9l6-5 5 3-6 7q-4 0-5-5z" fill="#f99" /></Svg>
          <Svg w={15} h={17} className="ml-[7px]"><text x="0" y="8" fontSize="8.500" textLength="13" lengthAdjust="spacingAndGlyphs" {...glyph}>abc</text><text x="5" y="16" fontSize="11" fontStyle="italic" {...glyph} fill="#369">A</text></Svg>
          <Svg w={16} h={16} className="ml-[6px]"><rect x=".5" y=".5" width="15" height="15" stroke="#369" /><text x="3" y="13.500" fontSize="14" textLength="10" lengthAdjust="spacingAndGlyphs" {...glyph}>A</text></Svg>
        </div>
        <div className="mt-[8px] flex h-[22px] items-center pl-[14px] leading-[22px] text-[#666]">
          <Fit className="w-[8px] text-[13px] font-bold">B</Fit>
          <Fit className="ml-[14px] w-[7px] font-['Liberation_Serif',serif] text-[14px] font-bold italic">I</Fit>
          <span className="ml-[14px] h-[14px] w-[9px] border-b border-[#666]"><Fit className="w-[9px] text-[13px] font-semibold leading-3">U</Fit></span><Caret className="ml-[10px]" />
          <Fit className="ml-[7px] w-[16px] text-[12px] font-semibold line-through">abc</Fit>
          <Svg w={13} h={16} className="ml-[8px]"><text x="0" y="12" fontSize="13" textLength="7" lengthAdjust="spacingAndGlyphs" {...glyph}>x</text><text x="8.500" y="14.500" fontSize="7.500" {...glyph} fill="#369">2</text></Svg>
          <Svg w={13} h={16} className="ml-[9px]"><text x="0" y="12" fontSize="13" textLength="7" lengthAdjust="spacingAndGlyphs" {...glyph}>x</text><text x="8.500" y="7.500" fontSize="7.500" {...glyph} fill="#369">2</text></Svg>
          <Sep className="ml-[8px]" />
          <Svg w={14} h={15} className="ml-[8px]"><text x="1" y="13.500" fontSize="16" textLength="12" lengthAdjust="spacingAndGlyphs" fontFamily="Open Sans, sans-serif" fontWeight="bold" fill="#fff" stroke="#369">A</text></Svg><Caret className="ml-[5px]" />
          <Svg w={16} h={17} className="ml-[8px]"><text x="0" y="9" fontSize="10" textLength="10" lengthAdjust="spacingAndGlyphs" {...glyph}>ab</text><path d="M15 2L6 11" stroke="#666" strokeWidth="2.500" /><rect y="13" width="16" height="3" fill="#ff0" /></Svg><Caret className="ml-[6px]" />
          <Svg w={16} h={17} className="ml-[7px]"><text x="3" y="12" fontSize="14" textLength="10" lengthAdjust="spacingAndGlyphs" {...glyph}>A</text><rect y="13" width="16" height="3" fill="#f00" /></Svg><Caret className="ml-[6px]" />
          <Svg w={14} h={14} className="ml-[8px]"><rect width="14" height="14" fill="#ccc" /><text x="2" y="12" fontSize="14" textLength="10" lengthAdjust="spacingAndGlyphs" {...glyph}>A</text></Svg>
          <Svg w={16} h={16} className="ml-[7px]"><circle cx="8" cy="8" r="7.500" stroke="#666" /><text x="3.500" y="11.500" fontSize="9" fontFamily="Noto Sans CJK SC, sans-serif" fill="#444">字</text></Svg>
        </div>
      </Group>
      <Divider />
      <Group className="w-[187px]" label={<><Fit className="ml-[59px] w-[53px]">Paragraph</Fit><Launcher className="ml-[64px] mt-px" /></>}>
        <div className="mt-[3px] flex h-[23px] items-center pl-[12px]">
          <Svg w={14} h={16}><path d="M0 2h3M0 8h3M0 14h3" stroke="#369" strokeWidth="3" /><path d="M5 2.500h8M5 8.500h8M5 14.500h8" stroke="#666" /></Svg><Caret className="ml-[7px]" />
          <div className="ml-[4px] flex h-[23px] w-[34px] items-center bg-[#ccc] pl-[4px]"><Svg w={14} h={17}><g fontSize="6.500" {...glyph} fill="#369"><text x="0" y="5.500">1</text><text x="0" y="11">2</text><text x="0" y="16.500">3</text></g><path d="M5 2.500h9M5 8.500h9M5 14.500h9" stroke="#666" /></Svg><Caret className="ml-[7px]" /></div>
          <Svg w={16} h={17} className="ml-[3px]"><g fontSize="7" {...glyph} fill="#369"><text x="0" y="5.500">1</text><text x="4" y="11">a</text><text x="9" y="17">i</text></g><path d="M5 2.500h8M9 8.500h7M13 14.500h3" stroke="#666" /></Svg><Caret className="ml-[4px]" />
          <Sep className="ml-[9px]" />
          <Svg w={16} h={13} className="ml-[7px]"><path d="M0 .5h16M9 3.500h7M9 6.500h7M9 9.500h7M0 12.500h16" stroke="#666" /><path d="M7 6.500H1M4 3L1 6.500 4 10" stroke="#369" strokeWidth="1.800" /></Svg>
          <Svg w={16} h={13} className="ml-[6px]"><path d="M0 .5h16M9 3.500h7M9 6.500h7M9 9.500h7M0 12.500h16" stroke="#666" /><path d="M0 6.500h6M3 3l3 3.500L3 10" stroke="#369" strokeWidth="1.800" /></Svg>
        </div>
        <div className="flex h-[23px] items-center pl-[8px]">
          <div className="flex h-[23px] w-[22px] items-center justify-center bg-[#ccc]"><Lines ys={ALIGN} x2={[14, 9, 14, 9]} /></div>
          <div className="ml-[4px]"><Lines ys={ALIGN} x1={[0, 3, 0, 3]} x2={[14, 11, 14, 11]} /></div>
          <div className="ml-[8px]"><Lines ys={ALIGN} x1={[0, 5, 0, 5]} /></div>
          <div className="ml-[8px]"><Lines ys={ALIGN} /></div>
          <Svg w={16} h={16} className="ml-[7px]"><path d="M.5 0v15M15.500 0v15" stroke="#369" /><path d="M3 3h10M5 .5L2.500 3 5 5.500M11 .5L13.500 3 11 5.500" stroke="#369" strokeWidth="1.300" /><path d="M2 7.500h12M2 9.500h12M2 12.500h12M2 14.500h12" stroke="#666" /></Svg>
          <Sep className="ml-[7px]" />
          <Svg w={15} h={16} className="ml-[7px]"><path d="M3 1v14M.5 4L3 1l2.500 3M.5 12L3 15l2.500-3" stroke="#369" strokeWidth="1.500" /><path d="M7 3.500h8M7 6.500h8M7 9.500h8M7 12.500h8" stroke="#666" /></Svg><Caret className="ml-[5px]" />
        </div>
        <div className="flex h-[23px] items-center pl-[11px]">
          <Svg w={17} h={16}><path d="M2 7l6-5 5 5-5 4H5zM7 5V0" stroke="#666" /><path d="M12 4q4 1 3 6l-3-2z" fill="#369" /><rect x=".5" y="12.500" width="15" height="3" stroke="#666" fill="#fff" /></Svg><Caret className="ml-[5px]" />
          <Svg w={13} h={13} className="ml-[8px]"><path d="M.5 0v12M6.500 0v12M12.500 0v12M0 .5h13M0 6.500h13" stroke="#666" strokeDasharray="1 1" /><path d="M0 12.500h13" stroke="#444" /></Svg><Caret className="ml-[8px]" />
          <Sep className="ml-[8px]" />
          <Svg w={16} h={14} className="ml-[7px]"><text x="3" y="14" fontSize="13" textLength="10" lengthAdjust="spacingAndGlyphs" {...glyph}>A</text><path d="M5 3H1M3 .5L.7 3 3 5.500M11 3h4M13 .5L15.300 3 13 5.500" stroke="#369" strokeWidth="1.400" /></Svg><Caret className="ml-[4px]" />
          <Sep className="ml-[9px]" />
          <Svg w={14} h={16} className="ml-[8px]"><text x="0" y="7.500" fontSize="9" {...glyph} fill="#369">A</text><text x="0" y="15.500" fontSize="9" {...glyph} fill="#969">Z</text><path d="M11 1v13M8 11l3 3 3-3" stroke="#555" strokeWidth="1.400" /></Svg>
          <Sep className="ml-[8px]" />
          <Svg w={11} h={13} className="ml-[10px]"><path d="M4 7Q0 7 0 3.500T4 0h6v1.500H9V13H7.500V1.500H6V13H4.500V7z" fill="#666" /></Svg>
        </div>
      </Group>
      <Divider />
      <Group className="w-[254px]" label={<><Fit className="ml-[104px] w-[29px]">Styles</Fit><Launcher className="ml-[110px] mt-px" /></>}>
        <div className="ml-[9px] flex h-[66px] pt-[6px]">
          <div className="flex h-[60px] w-[218px] border border-r-0 border-[#ccc] text-[#666]">
            <div className="ml-[6px] w-[59px] overflow-hidden"><Fit className="mt-[12px] w-[64px] text-[12px] leading-5 text-black">AaBbCcDd</Fit><Fit className="ml-[4px] mt-[4px] w-[49px] leading-5">¶ Normal</Fit></div>
            <div className="ml-[13px] w-[59px] overflow-hidden"><Fit className="mt-[12px] w-[64px] text-[12px] leading-5 text-black">AaBbCcDd</Fit></div>
            <div className="ml-[13px] w-[59px] overflow-hidden"><Fit className="mt-[12px] w-[66px] text-[17px] font-light leading-5 text-[#369]">AaBbCc</Fit><Fit className="ml-[3px] mt-[4px] w-[54px] leading-5">Heading 1</Fit></div>
            <Fit className="-ml-[132px] mt-[36px] w-[61px] leading-5">¶ No Spac...</Fit>
          </div>
          <div className="flex h-[60px] w-[17px] flex-col">
            <div className="flex h-[20px] items-center justify-center border border-[#ccc]"><Chevron up stroke="#bbb" /></div>
            <div className="flex h-[20px] items-center justify-center border border-[#888]"><Chevron /></div>
            <div className="flex h-[20px] flex-col items-center justify-center gap-[4px] border border-[#888]"><div className="h-px w-[15px] bg-[#333]" /><Chevron /></div>
          </div>
        </div>
      </Group>
      <Divider />
      <div className="flex w-[53px] flex-col items-center pt-[4px]">
        <div className="flex h-[31px] w-[32px] items-center justify-center border border-[#999]"><Svg w={13} h={13}><circle cx="8" cy="5" r="3.800" stroke="#369" strokeWidth="1.600" /><path d="M5 8l-4.500 4.500" stroke="#369" strokeWidth="2" /></Svg></div>
        <Fit className="mt-[2px] w-[37px] leading-5">Editing</Fit>
        <Caret className="mt-[5px]" />
      </div>
      <Divider />
      <Chevron up w={11} h={6} className="ml-[21px] mt-[82px]" stroke="#666" />
    </div>
  );
}

const UNIT = 37.8;
const ruler = { fontFamily: "Open Sans, sans-serif", fontSize: 9.5, fill: "#333", textAnchor: "middle" };

const HRuler = () => {
  const marks = [];
  for (let q = -13; q <= 71; q++) {
    const x = 480.6 + (q * UNIT) / 4;
    const n = Math.abs(q / 4);
    if (q === 0 || x > 1154) continue;
    if (q % 4 === 0) marks.push(<text key={q} x={x} y="10" {...ruler}>{n}</text>);
    else marks.push(<path key={q} d={q % 2 === 0 ? `M${Math.floor(x)}.5 4v5` : `M${Math.floor(x)}.5 6v2`} stroke="#333" />);
  }
  return (
    <svg width="899" height="22" viewBox="309 0 899 22" fill="none" className="block overflow-visible">
      <path d="M360 .5h795M360 11.500h795" stroke="#ccc" />
      <rect x="360" width="122" height="12" fill="#ccc" /><rect x="1032" width="123" height="12" fill="#ccc" />
      {marks}
      <g fill="#fff" stroke="#888">
        <path d="M501.500-1.500h8v4l-4 4-4-4z" />
        <path d="M529.500 6.500l4 4v9h-8v-9zM525.500 13.500h8" />
        <path d="M1034.500 6.500l4 4v3h-8v-3z" />
      </g>
    </svg>
  );
};

const VRuler = () => {
  const marks = [];
  for (let q = -9; q <= 74; q++) {
    const y = 278.7 + (q * UNIT) / 4;
    if (q === 0 || y > 974) continue;
    if (q % 4 === 0) marks.push(<text key={q} x="0" y="3.5" transform={`translate(297 ${y}) rotate(-90)`} {...ruler}>{Math.abs(q / 4)}</text>);
    else marks.push(<path key={q} d={q % 2 === 0 ? `M296 ${Math.round(y)}.5h5` : `M298 ${Math.round(y)}.5h2`} stroke="#333" />);
  }
  return (
    <svg width="23" height="796" viewBox="286 181 23 796" fill="none" className="block shrink-0">
      <path d="M290.500 280v697M302.500 280v697" stroke="#ccc" /><rect x="290" y="181" width="13" height="100" fill="#ccc" />
      {marks}
    </svg>
  );
};

const Line = ({ children }) => <div className="flex h-[45.600px] items-start text-[31px] leading-[44px] text-black">{children}</div>;

function Page() {
  return (
    <div className="relative ml-[53px] mt-[2px] h-[794px] w-[793px] border-x border-t border-[#ccc] bg-white">
      <div className="flex justify-between px-[95px] pt-[71px]">
        <div className="h-[24px] w-[24px] border-b border-r border-[#999]" />
        <div className="-mr-[1px] h-[24px] w-[24px] border-b border-l border-[#999]" />
      </div>
      <div className="flex h-[46px]">
        <div className="ml-[143px] flex h-[43px] w-[72px] bg-[#ff0] text-[31px] leading-[44px]"><Fit className="w-[25px]">1.</Fit></div>
        <div className="flex h-[46px] w-[223px] bg-[#ccc] text-[31px] leading-[44px]"><div className="h-[43px] w-[203px] bg-[#cc0]"><Fit className="w-[203px]">Set one layout</Fit></div></div>
      </div>
      <Line><Fit className="ml-[143px] w-[25px]">2.</Fit><Fit className="ml-[47px] w-[451px]">Align the other viewports to the</Fit></Line>
      <Line><Fit className="ml-[167px] w-[377px]">same location angle, scale,</Fit></Line>
      <Line><Fit className="ml-[167px] w-[439px]">direction and UCS in the model</Fit></Line>
      <Line>
        <Fit className="ml-[167px] w-[118px]">space as</Fit>
        <Fit className="ml-[8px] w-[104px]">that  of</Fit>
        <Fit className="ml-[7px] w-[28px]">th</Fit>
        <Fit className="ml-[3px] mt-[4px] w-[7px] font-['Liberation_Serif',serif] text-[15px]">3</Fit>
        <Fit className="ml-[47px] w-[91px]">evious</Fit>
      </Line>
      <Line><Fit className="ml-[167px] w-[126px]">viewport</Fit></Line>
      <Svg w={104} h={4} className="absolute left-[293px] top-[315px]"><path d={"M0 3" + "l2-2.500l2 2.500".repeat(26)} stroke="#37c" strokeWidth="1.100" /></Svg>
      <svg width="19" height="66" viewBox="841 477 19 66" fill="none" className="absolute left-[478px] top-[293px] bg-white">
        <path d="M842 479l18 9" stroke="#b44" /><path d="M859.500 495l-12 28" stroke="#0ff" strokeWidth="3.500" /><path d="M846 525l-3 4 2 13" stroke="#0ff" strokeWidth="1.500" />
        <path d="M860 510l-14 32" stroke="#d11" strokeWidth="2" /><path d="M860 517l-11 24" stroke="#a77" strokeWidth="1.500" /><path d="M855 532l4-4v6l-4 4h5v4h-5z" stroke="#a96" />
      </svg>
    </div>
  );
}

function WordStatus() {
  return (
    <div className="flex h-[22px] items-center border-t border-[#ccc] bg-white text-[12px] leading-[21px] text-[#333]">
      <Fit className="ml-[7px] w-[57px]">Page 1 of 1</Fit>
      <Fit className="ml-[20px] w-[47px]">28 words</Fit>
      <Svg w={14} h={13} className="ml-[19px]"><path d="M6.500 12V2Q4 .5.500.500v10q4 0 6 2 1-1 2-1.500M6.500 2Q9 .5 13 .5v2" stroke="#666" /><path d="M8 4l5 6M13 4l-5 6" stroke="#555" strokeWidth="1.400" /></Svg>
      <Fit className="ml-[18px] w-[114px]">English (New Zealand)</Fit>
      <Svg w={14} h={12} className="ml-[343px]"><path d="M.5.500h13v10h-5l-1.500 1-1.500-1h-5zM7 1v10" stroke="#666" /><path d="M2 3h4M2 5h4M2 7h4M8 3h4M8 5h4M8 7h4" stroke="#666" /></Svg>
      <div className="ml-[14px] flex h-[21px] w-[39px] items-center justify-center bg-[#ccc]"><Svg w={14} h={13}><path d="M.5.500h13v12H.5zM2 3.500h10M2 5.500h10M2 7.500h10M2 9.500h10" stroke="#555" /></Svg></div>
      <Svg w={14} h={13} className="ml-[14px]"><path d="M6 12H.5V.500h10V5M2 3.500h7M2 5.500h5M2 7.500h4" stroke="#666" /><circle cx="10" cy="9" r="3.500" fill="#666" /><path d="M8 8l2 2 1-3" stroke="#fff" /></Svg>
      <Svg w={8} h={9} className="ml-[19px]"><path d="M0 4.500h8" stroke="#444" /></Svg>
      <div className="ml-[5px] flex h-[12px] w-[101px] items-center"><div className="h-px w-[48px] bg-[#999]" /><div className="h-[11px] w-[5px] bg-[#666]" /><div className="h-px w-[48px] bg-[#999]" /></div>
      <Svg w={9} h={9} className="ml-[3px]"><path d="M0 4.500h9M4.500 0v9" stroke="#444" /></Svg>
      <Fit className="ml-[13px] w-[27px]">100%</Fit>
    </div>
  );
}

const ScrollBar = () => (
  <div className="flex w-[16px] shrink-0 flex-col pt-[2px]">
    <div className="flex h-[15px] items-center justify-center border border-[#999] bg-white"><Svg w={7} h={4}><path d="M0 4h7L3.500 0z" fill="#666" /></Svg></div>
    <div className="h-[562px] border border-[#999] bg-white" />
    <div className="flex-1 bg-[#ccc]" />
    <div className="flex h-[14px] items-center justify-center border border-[#999] bg-white"><Svg w={7} h={4}><path d="M0 0h7L3.500 4z" fill="#666" /></Svg></div>
    <div className="h-[2px]" />
  </div>
);

function WordWindow() {
  return (
    <div className="absolute left-[285px] top-px flex h-[999px] w-[940px] flex-col border-x border-b border-[#336699] bg-white">
      <WordTop />
      <Ribbon />
      <div className="flex h-[835px]">
        <div className="flex w-[23px] flex-col">
          <div className="mb-[17px] flex h-[22px] shrink-0 border-4 border-[#ccc] bg-white"><Svg w={15} h={14}><path d="M5 4v6h6" stroke="#555" strokeWidth="2" /></Svg></div>
          <VRuler />
        </div>
        <div className="w-[899px] overflow-hidden">
          <div className="h-[39px] pt-[4px]"><HRuler /></div>
          <Page />
        </div>
        <ScrollBar />
      </div>
      <WordStatus />
    </div>
  );
}

export default function App() {
  return (
    <div className="relative h-[1022px] w-[1656px] overflow-hidden bg-black font-['Open_Sans','Noto_Sans',sans-serif]">
      <div className="flex h-[1022px] flex-col pb-px pl-[2px] pr-px pt-px">
        <div className="flex h-[988px] justify-between bg-[#333]">
          <div className="flex w-[283px] flex-col border-l border-[#555] pl-[3px]">
            <div className="h-[160px] overflow-hidden"><CadLeft /></div>
            <CanvasLeft />
          </div>
          <div className="flex w-[430px] flex-col">
            <div className="h-[160px] overflow-hidden"><CadTopRight /></div>
            <SiteMap />
          </div>
        </div>
        <CadBottom />
      </div>
      <WordWindow />
    </div>
  );
}
